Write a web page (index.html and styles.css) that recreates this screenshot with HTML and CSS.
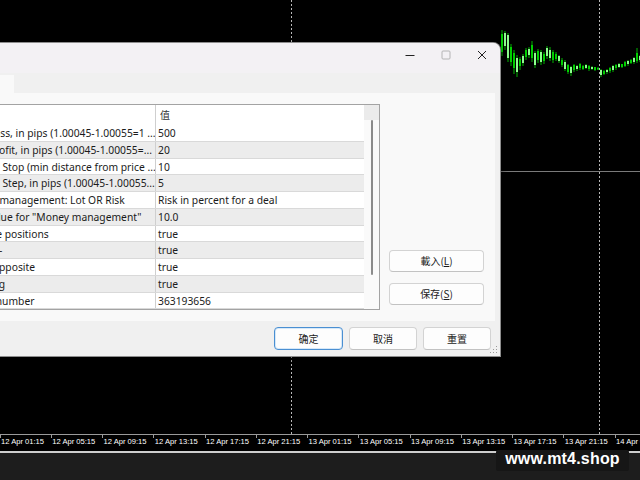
FILE: index.html
```html
<!DOCTYPE html>
<html lang="zh">
<head>
<meta charset="utf-8">
<title>MT4 Inputs</title>
<link rel="stylesheet" href="styles.css">
</head>
<body>
<div class="screen">
  <div class="chart">
    <svg class="chart-svg" width="640" height="434" viewBox="0 0 640 434">
      <path class="grid-dot" d="M291.5 0V434M599.5 0V434"/>
      <path class="hline" d="M480 171.5H640"/>
      <path class="wick" d="M502 30V56M505 31V50M508 33V62M511 44V66M514 50V74M517 55V77M520 57V70M523 54V66M526 48V60M529 47V58M532 41V62M535 51V68M538 49V63M541 50V65M544 52V64M547 46V59M550 47V61M553 50V63M556 52V61M559 55V63M562 58V67M565 60V71M568 64V74M571 66V76M574 64V72M577 65V71M580 63V70M583 65V70M586 64V69M589 65V71M592 66V70M595 67V71M598 67V70M601 69V77M604 70V75M607 69V74M610 67V73M613 65V72M616 64V70M619 63V68M622 64V68M625 61V67M628 60V66M631 59V64M634 57V64M637 48V63M640 55V62"/>
      <path class="body-a" d="M502 34V52M511 47V62M514 53V68M520 59V66M526 50V57M532 45V58M538 51V60M544 54V61M553 52V60M556 54V59M562 60V65M568 65V72M574 65V70M580 64V68M583 66V69M589 66V69M595 67V70M598 68V69.5M604 71V74M610 68V71M616 65V68M622 64V67M625 62V66M631 60V63M637 53V61"/>
      <path class="body-b" d="M505 33V46M508 35V58M517 58V72M523 56V63M529 49V55M535 53V65M541 52V62M547 48V56M550 50V58M559 56V61M565 62V69M571 67V73M577 66V69M586 65V68M592 67V69M601 70V75M607 70V72M613 66V70M619 64V67M628 61V64M634 58V62M640 56V60"/>
    </svg>
  </div>
  <div class="axis">
    <span class="tick">12 Apr 01:15</span>
    <span class="tick">12 Apr 05:15</span>
    <span class="tick">12 Apr 09:15</span>
    <span class="tick">12 Apr 13:15</span>
    <span class="tick">12 Apr 17:15</span>
    <span class="tick">12 Apr 21:15</span>
    <span class="tick">13 Apr 01:15</span>
    <span class="tick">13 Apr 05:15</span>
    <span class="tick">13 Apr 09:15</span>
    <span class="tick">13 Apr 13:15</span>
    <span class="tick">13 Apr 17:15</span>
    <span class="tick">13 Apr 21:15</span>
    <span class="tick">14 Apr 01:15</span>
  </div>
  <div class="taskbar"></div>

  <div class="dialog">
    <div class="titlebar">
      <div class="caption-btns">
        <span class="cap-btn"><svg width="10" height="10" viewBox="0 0 10 10"><path d="M0.5 5.5H9.5" class="cap-ico"/></svg></span>
        <span class="cap-btn"><svg width="10" height="10" viewBox="0 0 10 10"><rect x="1" y="1" width="8" height="8" rx="1" class="cap-ico dis"/></svg></span>
        <span class="cap-btn"><svg width="10" height="10" viewBox="0 0 10 10"><path d="M1 1L9 9M9 1L1 9" class="cap-ico"/></svg></span>
      </div>
    </div>
    <div class="tabstrip">
      <div class="tab"></div>
    </div>
    <div class="panel">
      <div class="list">
        <div class="rows">
          <div class="hdr"><span class="c1"></span><span class="c2">值</span></div>
          <div class="row"><span class="c1">Stop Loss, in pips (1.00045-1.00055=1 ...</span><span class="c2">500</span></div>
          <div class="row alt"><span class="c1">Take Profit, in pips (1.00045-1.00055=...</span><span class="c2">20</span></div>
          <div class="row"><span class="c1">Trailing Stop (min distance from price ...</span><span class="c2">10</span></div>
          <div class="row alt"><span class="c1">Trailing Step, in pips (1.00045-1.00055...</span><span class="c2">5</span></div>
          <div class="row"><span class="c1">Money management: Lot OR Risk</span><span class="c2">Risk in percent for a deal</span></div>
          <div class="row alt"><span class="c1">Risk Value for "Money management"</span><span class="c2">10.0</span></div>
          <div class="row"><span class="c1">Reverse positions</span><span class="c2">true</span></div>
          <div class="row alt"><span class="c1">Revers -</span><span class="c2">true</span></div>
          <div class="row"><span class="c1">Close opposite</span><span class="c2">true</span></div>
          <div class="row alt"><span class="c1">Print log</span><span class="c2">true</span></div>
          <div class="row"><span class="c1">Magic number</span><span class="c2">363193656</span></div>
        </div>
        <div class="vscroll">
          <div class="sb-top"></div>
          <div class="sb-thumb"></div>
        </div>
      </div>
      <div class="side">
        <button class="btn side-btn">載入(<u>L</u>)</button>
        <button class="btn side-btn">保存(<u>S</u>)</button>
      </div>
    </div>
    <div class="footer">
      <button class="btn ok">确定</button>
      <button class="btn w68">取消</button>
      <button class="btn w68">重置</button>
    </div>
    <svg class="grip" width="8" height="8" viewBox="0 0 8 8">
      <rect x="6" y="0" width="1" height="1"/><rect x="3" y="3" width="1" height="1"/><rect x="6" y="3" width="1" height="1"/>
      <rect x="0" y="6" width="1" height="1"/><rect x="3" y="6" width="1" height="1"/><rect x="6" y="6" width="1" height="1"/>
    </svg>
  </div>

  <div class="watermark">www.mt4.shop</div>
</div>
</body>
</html>
```

FILE: styles.css
```css
html, body {
  margin: 0;
  padding: 0;
  background: #000;
}

.screen {
  position: relative;
  width: 640px;
  height: 480px;
  overflow: hidden;
  background: #000;
}

.chart {
  height: 434px;
}

.chart-svg {
  display: block;
}

.grid-dot {
  stroke: #b8b8b8;
  stroke-width: 1;
  stroke-dasharray: 2 2;
  fill: none;
}

.hline {
  stroke: #7a7a7a;
  stroke-width: 1;
  fill: none;
}

.wick {
  stroke: #00b400;
  stroke-width: 1;
  fill: none;
}

.body-a {
  stroke: #00d000;
  stroke-width: 2;
  fill: none;
}

.body-b {
  stroke: #8dff8d;
  stroke-width: 2;
  fill: none;
}

.axis {
  height: 17px;
  border-top: 1px solid #9a9a9a;
  box-sizing: border-box;
  display: flex;
  margin-left: -0.5px;
  white-space: nowrap;
  overflow: hidden;
  font-family: "Liberation Sans", Arial, sans-serif;
  font-size: 7.6px;
  color: #fff;
}

.tick {
  flex: 0 0 51.25px;
  position: relative;
  padding-left: 1.5px;
  line-height: 13px;
  box-sizing: border-box;
}

.tick::before {
  content: "";
  position: absolute;
  left: 0;
  top: 0;
  width: 1px;
  height: 3px;
  background: #9a9a9a;
}

.taskbar {
  height: 29px;
  border-top: 2px solid #cdcdcd;
  box-sizing: border-box;
  background: #1d1d1d;
}

/* Dialog window */
.dialog {
  position: absolute;
  left: -52px;
  top: 43px;
  width: 552px;
  height: 313px;
  background: #f0f0f0;
  border-top-right-radius: 7px;
  box-shadow: 0 0 0 1px #8d8d8d, 0 2px 8px rgba(0, 0, 0, 0.6);
  display: flex;
  flex-direction: column;
  font-family: "Noto Sans", "Noto Sans CJK SC", sans-serif;
  font-size: 10.3px;
  color: #1b1b1b;
}

.titlebar {
  height: 30px;
  flex: 0 0 30px;
  background: #f3f1f4;
  border-top-right-radius: 7px;
  display: flex;
  justify-content: flex-end;
}

.caption-btns {
  display: flex;
  height: 24px;
}

.cap-btn {
  width: 36px;
  display: flex;
  align-items: center;
  justify-content: center;
}

.cap-ico {
  stroke: #222;
  stroke-width: 1;
  fill: none;
}

.cap-ico.dis {
  stroke: #b4b4b4;
}

.tabstrip {
  height: 20px;
  flex: 0 0 20px;
  background: #f0f0f0;
  display: flex;
  align-items: flex-end;
  padding-left: 6px;
}

.tab {
  width: 60px;
  height: 18px;
  background: #f9f9f9;
}

.panel {
  flex: 0 0 228px;
  height: 228px;
  box-sizing: border-box;
  margin: 0 5px;
  padding: 11px 11px 0 2px;
  background: #f9f9f9;
  display: flex;
  align-items: flex-start;
}

.list {
  width: 425px;
  height: 206.25px;
  box-sizing: border-box;
  border: 1px solid #a3a3a3;
  background: #fff;
  display: flex;
  overflow: hidden;
}

.rows {
  flex: 1;
  display: flex;
  flex-direction: column;
  overflow: hidden;
}

.hdr, .row {
  display: flex;
  white-space: nowrap;
}

.hdr {
  height: 20px;
  flex: 0 0 20px;
  line-height: 20px;
  background: #fff;
}

.row {
  height: 16.75px;
  flex: 0 0 16.75px;
  line-height: 16px;
  box-sizing: border-box;
  border-bottom: 1px solid #d9d9d9;
  background: #fff;
}

.row.alt {
  background: #ececec;
}

.c1 {
  flex: 0 0 200px;
  box-sizing: border-box;
  padding-left: 8px;
  border-right: 1px solid #cfcfcf;
  overflow: hidden;
}

.c2 {
  flex: 1;
  padding-left: 2px;
  overflow: hidden;
}

.hdr .c2 {
  padding-left: 4px;
  font-family: "Noto Sans CJK SC", sans-serif;
  font-size: 10px;
  color: #333;
}

.vscroll {
  flex: 0 0 15px;
  background: #fafafa;
  display: flex;
  flex-direction: column;
  align-items: center;
}

.sb-top {
  align-self: stretch;
  height: 15px;
  background: #ebebeb;
}

.sb-thumb {
  width: 2px;
  height: 155px;
  border-radius: 1px;
  background: #8b8b8b;
}

.side {
  align-self: flex-end;
  margin-left: 9px;
  margin-bottom: 16px;
  display: flex;
  flex-direction: column;
  gap: 11px;
}

.btn {
  height: 23px;
  box-sizing: border-box;
  padding: 0;
  background: #fdfdfd;
  border: 1px solid #d3d3d3;
  border-bottom-color: #c2c2c2;
  border-radius: 4px;
  font-family: "Noto Sans CJK SC", sans-serif;
  font-size: 10px;
  color: #1b1b1b;
  line-height: 20px;
}

.side-btn {
  width: 95px;
  height: 22px;
}

.footer {
  flex: 1;
  display: flex;
  justify-content: flex-end;
  gap: 6px;
  padding: 6px 9px 0 0;
}

.ok {
  width: 69px;
  border: 1px solid #4a8fd2;
  box-shadow: inset 0 0 0 1px #d6e8f8;
}

.w68 {
  width: 68px;
}

.grip {
  position: absolute;
  right: 2px;
  bottom: 2px;
  fill: #9a9a9a;
}

.watermark {
  position: absolute;
  left: 496px;
  top: 450px;
  width: 133px;
  height: 21px;
  background: #161616;
  border-radius: 2px;
  color: #fff;
  font-family: "Liberation Sans", Arial, sans-serif;
  font-weight: bold;
  font-size: 16px;
  line-height: 18px;
  text-align: center;
  letter-spacing: 0.2px;
}
```
